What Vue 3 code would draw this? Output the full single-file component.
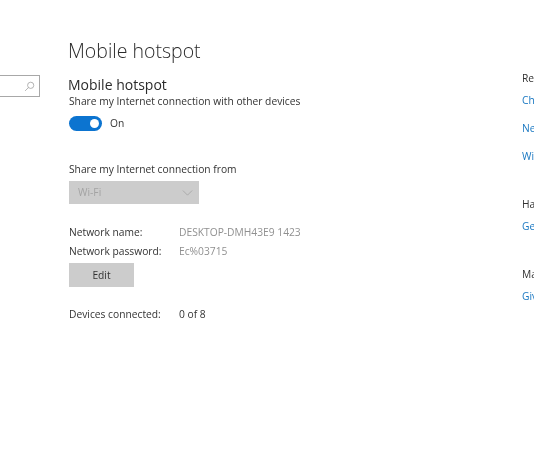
<script setup>
const details = [
  { label: 'Network name:', value: 'DESKTOP-DMH43E9 1423' },
  { label: 'Network password:', value: 'Ec%03715' },
]
const sideGroups = [
  { title: 'Related settings', links: ['Change adapter options', 'Network and Sharing Center', 'Windows Firewall'] },
  { title: 'Have a question?', links: ['Get help'] },
  { title: 'Make Windows better', links: ['Give us feedback'] },
]
</script>

<template>
  <div class="page">
    <aside class="nav">
      <div class="search">
        <svg class="search-icon" viewBox="0 0 12 12" width="11" height="11" aria-hidden="true">
          <circle cx="7.3" cy="4.7" r="3.4" fill="none" stroke="#9a9a9a" stroke-width="0.8" />
          <path d="M4.8 7.2 1.2 10.8" fill="none" stroke="#9a9a9a" stroke-width="0.8" />
        </svg>
      </div>
    </aside>

    <main class="main">
      <h1 class="title">Mobile hotspot</h1>
      <h2 class="subtitle">Mobile hotspot</h2>
      <p class="text">Share my Internet connection with other devices</p>
      <div class="toggle-row">
        <span class="toggle"><span class="knob"></span></span>
        <span class="text">On</span>
      </div>

      <p class="text from">Share my Internet connection from</p>
      <div class="select">
        <span>Wi-Fi</span>
        <svg viewBox="0 0 12 7" width="11" height="6" aria-hidden="true">
          <path d="M.6.6 6 6 11.4.6" fill="none" stroke="#a6a6a6" stroke-width="1" />
        </svg>
      </div>

      <div class="details">
        <div v-for="d in details" :key="d.label" class="row">
          <span class="label">{{ d.label }}</span>
          <span class="muted">{{ d.value }}</span>
        </div>
      </div>
      <div class="button">Edit</div>
      <div class="row devices">
        <span class="label">Devices connected:</span>
        <span class="text">0 of 8</span>
      </div>
    </main>

    <aside class="side">
      <section v-for="g in sideGroups" :key="g.title" class="group">
        <div class="group-title">{{ g.title }}</div>
        <div v-for="l in g.links" :key="l" class="link">{{ l }}</div>
      </section>
    </aside>
  </div>
</template>

<style>
html, body { margin: 0; background: #fff; overflow: hidden; }
</style>

<style scoped>
.page {
  width: 534px;
  height: 462px;
  display: flex;
  overflow: hidden;
  background: #fff;
  color: #333;
  font-family: "Open Sans", "Noto Sans", sans-serif;
  font-size: 10.25px;
  line-height: 15px;
  filter: blur(0.35px);
}
.nav { width: 68px; flex: none; padding-top: 75px; box-sizing: border-box; }
.search {
  width: 40px;
  height: 22px;
  box-sizing: border-box;
  border: 1px solid #a8a8a8;
  border-left: 0;
  display: flex;
  align-items: center;
  justify-content: flex-end;
  padding-right: 4px;
}
.main { width: 454px; flex: none; padding-top: 37px; box-sizing: border-box; }
.title { margin: 0; font-size: 19.5px; line-height: 28px; font-weight: 300; color: #2b2b2b; }
.subtitle { margin: 10px 0 0; font-size: 14px; line-height: 19px; font-weight: 400; color: #2b2b2b; }
.text { margin: 0; }
.main > .text { padding-left: 1px; }
.toggle-row { display: flex; align-items: center; gap: 8px; margin: 7px 0 0 1px; }
.toggle {
  width: 33px;
  height: 15px;
  border-radius: 8px;
  background: #0c74d0;
  display: flex;
  align-items: center;
  justify-content: flex-end;
  padding-right: 3px;
  box-sizing: border-box;
}
.knob { width: 9px; height: 9px; border-radius: 50%; background: #fff; }
.from { margin-top: 31px; }
.select {
  width: 130px;
  height: 23px;
  margin: 4px 0 0 1px;
  padding: 0 6px 0 9px;
  box-sizing: border-box;
  background: #cccccc;
  color: #a3a3a3;
  display: flex;
  align-items: center;
  justify-content: space-between;
}
.details { margin: 21px 0 0 1px; display: flex; flex-direction: column; gap: 4px; }
.row { display: flex; }
.label { width: 110px; flex: none; }
.muted { color: #909090; }
.button {
  width: 65px;
  height: 24px;
  margin: 4px 0 0 1px;
  background: #cccccc;
  display: flex;
  align-items: center;
  justify-content: center;
}
.devices { margin: 20px 0 0 1px; }
.side { width: 12px; flex: none; padding-top: 71px; white-space: nowrap; }
.group { margin-bottom: 33px; }
.group-title { margin-bottom: 7px; }
.link { color: #1a78c2; margin-bottom: 13px; }
</style>
